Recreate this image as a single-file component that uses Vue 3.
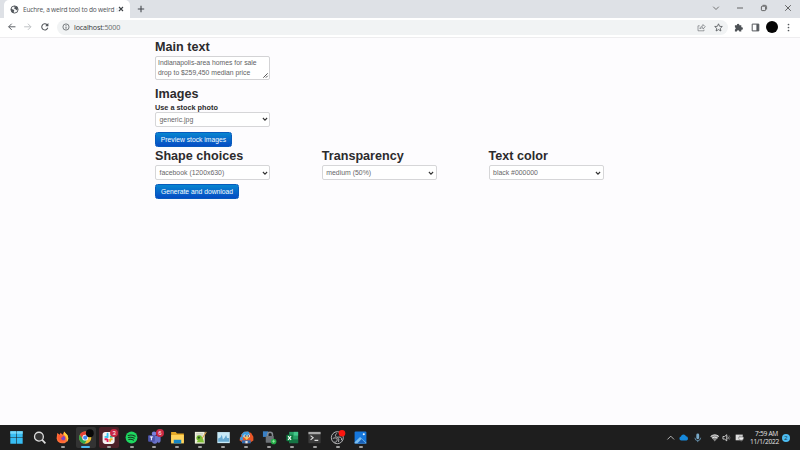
<script setup>
const choices = [
  { title: 'Shape choices', value: 'facebook (1200x630)' },
  { title: 'Transparency', value: 'medium (50%)' },
  { title: 'Text color', value: 'black #000000' },
]
const apps = ['start', 'search', 'firefox', 'chrome', 'slack', 'spotify', 'teams', 'folder', 'notepad', 'monitor', 'parrot', 'lock', 'excel', 'terminal', 'obs', 'photos']
</script>

<template>
  <div class="screen">
    <header class="tabs">
      <div class="tab">
        <svg class="globe" viewBox="0 0 10 10"><circle cx="5" cy="5" r="4" fill="#f7f8f8" stroke="#51565b" /><path d="M1 3.8 3.2 5.1 4.8 5.5 4.2 7 4.6 8.8 2.4 8 1.2 6zM4.2 1.1 8 2 8.8 4.7 7.3 5.7 6.2 4.6 4.6 4.2 5.2 3z" fill="#51565b" /></svg>
        <span class="tab-title">Euchre, a weird tool to do weird <span>s</span></span>
        <svg class="close" viewBox="0 0 6 6"><path d="m1 1 4 4M5 1 1 5" stroke="#3d4145" stroke-width="1.1" /></svg>
      </div>
      <svg class="plus" viewBox="0 0 8 8"><path d="M4 .8v6.4M.8 4h6.4" stroke="#45494e" stroke-width="1.1" /></svg>
      <div class="window-controls">
        <svg viewBox="0 0 8 8"><path d="m1.2 2.7 2.8 2.8 2.8-2.8" fill="none" stroke="#555" stroke-width=".8" /></svg>
        <svg viewBox="0 0 8 8"><path d="M1 4h6" stroke="#444" stroke-width=".8" /></svg>
        <svg viewBox="0 0 8 8"><rect x="1.4" y="2.2" width="4.2" height="4.4" rx=".8" fill="none" stroke="#444" stroke-width=".8" /><path d="M2.6 1.3h2.6q1.4 0 1.4 1.4v2.7" fill="none" stroke="#444" stroke-width=".7" /></svg>
        <svg viewBox="0 0 8 8"><path d="m1.2 1.2 5.6 5.6m0-5.6L1.2 6.8" stroke="#444" stroke-width=".8" /></svg>
      </div>
    </header>

    <nav class="toolbar">
      <div class="nav-icons">
        <svg viewBox="0 0 10 10"><path d="M8.8 5H1.8M4.9 1.8 1.7 5l3.2 3.2" fill="none" stroke="#55595e" /></svg>
        <svg viewBox="0 0 10 10"><path d="M1.2 5h7M5.1 1.8 8.3 5 5.1 8.2" fill="none" stroke="#bdc0c3" /></svg>
        <svg viewBox="0 0 10 10"><path d="M8.1 6A3.2 3.2 0 1 1 7.3 2.8L8.2 4" fill="none" stroke="#505459" stroke-width="1.1" /><path d="M8.7 1.1v3.3H5.4z" fill="#505459" /></svg>
      </div>
      <div class="address">
        <svg class="info" viewBox="0 0 8 8"><circle cx="4" cy="4" r="3.1" fill="none" stroke="#5b5f63" stroke-width=".8" /><path d="M4 3.6v2.1M4 2.1v.8" stroke="#55595d" stroke-width=".9" /></svg>
        <span class="url">localhost<span>:5000</span></span>
        <div class="address-actions">
          <svg viewBox="0 0 9 9"><path d="M2.7 2.8H1v5h6V6.6M2.9 6c.2-2 1.3-3 3.1-3V1.5l2.3 2.3L6 6V4.7C4.5 4.7 3.6 5 2.9 6z" fill="none" stroke="#73777b" stroke-width=".7" /></svg>
          <svg viewBox="0 0 9 9"><path d="m4.5.8 1.1 2.5 2.7.2-2 1.8.6 2.7-2.4-1.4L2.1 8l.6-2.7-2-1.8 2.7-.2z" fill="none" stroke="#4e5256" stroke-width=".8" /></svg>
        </div>
      </div>
      <div class="browser-actions">
        <svg viewBox="0 0 9 9"><path d="M.9 2.3h2a1.25 1.25 0 1 1 2.4 0h2v2a1.25 1.25 0 1 1 0 2.4v1.7H5.3a1.2 1.2 0 0 0-2.4 0h-2V6.5a1.2 1.2 0 0 0 0-2.3z" fill="#4e5256" /></svg>
        <svg viewBox="0 0 9 9"><path d="M1.2 1.1h6.6v6.8H1.2z" fill="none" stroke="#54585c" stroke-width="1" /><path d="M5.4 1.1h2.4v6.8H5.4z" fill="#54585c" /></svg>
        <span class="avatar"></span>
        <svg viewBox="0 0 9 9"><g fill="#54585c"><circle cx="4.5" cy="1.5" r=".85" /><circle cx="4.5" cy="4.5" r=".85" /><circle cx="4.5" cy="7.5" r=".85" /></g></svg>
      </div>
    </nav>

    <main class="page">
      <h3>Main text</h3>
      <div class="textarea">Indianapolis-area homes for sale<br>drop to $259,450 median price
        <svg viewBox="0 0 5 5"><path d="M.3 4.7 4.7.3M2.8 4.7l1.9-1.9" stroke="#444" stroke-width=".9" /></svg>
      </div>
      <h3 class="images-title">Images</h3>
      <label>Use a stock photo</label>
      <div class="select">generic.jpg<svg viewBox="0 0 6 6"><path d="m.9 2 2.1 2.1L5.1 2" fill="none" stroke="#333" stroke-width="1.1" /></svg></div>
      <button class="preview">Preview stock images</button>
      <div class="choices">
        <section v-for="choice in choices" :key="choice.title">
          <h3>{{ choice.title }}</h3>
          <div class="select">{{ choice.value }}<svg viewBox="0 0 6 6"><path d="m.9 2 2.1 2.1L5.1 2" fill="none" stroke="#333" stroke-width="1.1" /></svg></div>
        </section>
      </div>
      <button class="generate">Generate and download</button>
    </main>

    <footer class="taskbar">
      <div class="apps">
        <div v-for="app in apps" :key="app" class="app" :class="app">
          <svg viewBox="0 0 16 16">
            <g v-if="app === 'start'"><path d="M1.4 1.4h6.3v6.3H1.4zM8.3 1.4h6.3v6.3H8.3zM1.4 8.3h6.3v6.3H1.4zM8.3 8.3h6.3v6.3H8.3z" fill="#37bdf3" /><path d="M1.4 1.4h6.3v2.6H1.4zM8.3 1.4h6.3v2.6H8.3z" fill="#75d8fa" /></g>
            <g v-else-if="app === 'search'" fill="none" stroke="#ddd"><circle cx="7.4" cy="7.1" r="4.7" fill="#343434" stroke-width="1.4" /><path d="m10.8 10.5 3.5 3.7" stroke-width="1.8" /></g>
            <g v-else-if="app === 'firefox'"><path d="M2.4 3.2 5 5l1-2 2 2 2-3.4 3 4 1 3.9A6.3 6.3 0 0 1 1.7 9z" fill="#ff7139" /><path d="m9.5 1.6 4 4 .8 3.8-1.5 3.5C13 8 11 6 9.5 5z" fill="#ffce3a" /><circle cx="8" cy="8.8" r="2.8" fill="#7748c6" /><path d="m3 5 3.2.5L9 7.2 6.3 8.5l1.2 2.2 2.6.4A4.2 4.2 0 0 1 3 9z" fill="#ff5b31" /></g>
            <g v-else-if="app === 'chrome'"><circle cx="7.7" cy="8.2" r="6.5" fill="#f0bf31" /><path d="M1.9 5.1A6.5 6.5 0 0 1 13.5 5H7.7L5 9.8z" fill="#e54235" /><path d="M1.9 5.1A6.5 6.5 0 0 0 7 14.6L10 9.8 7.7 11 5 9.8z" fill="#2da84f" /><circle cx="7.7" cy="8.2" r="3.1" fill="#fff" /><circle cx="7.7" cy="8.2" r="2.3" fill="#4286ec" /><circle cx="12.6" cy="3.4" r="4.2" fill="#080808" /></g>
            <g v-else-if="app === 'slack'"><rect x="1.7" y="2" width="12.8" height="12.8" rx="3" fill="#f4f3f4" /><path d="M7 4v3.6" stroke="#36c5f0" stroke-width="2" stroke-linecap="round" /><path d="M3.8 7.4H7" stroke="#36c5f0" stroke-width="1.8" /><path d="M9.5 7.1h3" stroke="#2eb67d" stroke-width="2" /><path d="M9.7 9.6v3M9.7 9.8h2.7" stroke="#ecb22e" stroke-width="2" /><path d="M7 9.7v3M3.8 9.8H7" stroke="#e01e5a" stroke-width="2" /></g>
            <g v-else-if="app === 'spotify'"><circle cx="8" cy="8" r="6.3" fill="#1ed760" /><path d="M4.4 5.8q4-1.1 7.5.8M4.7 8q3.5-.8 6.3.8M5.1 10.1q2.8-.6 5 .7" fill="none" stroke="#183c22" stroke-width="1.2" stroke-linecap="round" /></g>
            <g v-else-if="app === 'teams'"><circle cx="7.5" cy="4.1" r="2.4" fill="#7980dc" /><path d="M5 6h6.8v5.2c0 2-1.5 3.4-3.4 3.4S5 13.2 5 11.2zM11 7h3.5v4.2c0 1.6-1 2.5-2.7 2.5z" fill="#6871c9" /><rect x="1.2" y="5.6" width="7.2" height="6.8" rx="1" fill="#4e56ad" /><path d="M3 7.4h3.5M4.7 7.4v3.5" stroke="#fff" /></g>
            <g v-else-if="app === 'folder'"><path d="M1.2 2.2h5l1.2 1.6h7.4V13H1.2z" fill="#e5a927" /><path d="M1.2 5.3h13.6v9H1.2z" fill="#ffd35c" /><path d="M4 10.4h8v3.9H4z" fill="#1686c5" /></g>
            <g v-else-if="app === 'notepad'"><path d="M2 2h10.5v12.5H2z" fill="#eff0dd" /><path d="M3.5 4h7M3.5 5.6h7" stroke="#999" stroke-width=".5" /><circle cx="6.6" cy="8.5" r="3" fill="#6fb92a" /><path d="m3.5 13 6.7-5.7 1.6 6z" fill="#7fbe35" /><circle cx="6.2" cy="8" r="1.2" fill="#294b1e" /><path d="m9.7 9 4.5-7" stroke="#d6a04b" stroke-width="1.1" /></g>
            <g v-else-if="app === 'monitor'"><path d="M1.4 2.2h13.3v11.8H1.4z" fill="#c8e9f7" /><path d="M2.3 9 4.8 8l1.4-3 1.2 5 2-2 1.4-2.6 1 3 2.1.2v4H2.3z" fill="#66a9d1" /></g>
            <g v-else-if="app === 'parrot'"><path d="m.5 11 2-6L5 2l4-.5 4 1.8 2.3 4v4L11 14H5z" fill="#e95626" /><path d="m2.5 4.8 3-3L10 1.7l2 3.2-8 3zM.8 8.5l2.6-2 1 3.8-2.8 1z" fill="#3b9bdf" /><circle cx="6.3" cy="6.3" r="1.6" fill="#fff" /><circle cx="10" cy="6.3" r="1.6" fill="#fff" /><circle cx="6.6" cy="6.3" r=".8" /><circle cx="9.8" cy="6.3" r=".8" /><path d="m6 8.2 2-1.6 2.4 1.6-2.2 2.5z" fill="#eec85c" /><path d="M3.2 11h9.3v3.2H3.2z" fill="#326caf" /><path d="M6.8 11.7h2.4v2.5H6.8z" fill="#e8e6e1" /></g>
            <g v-else-if="app === 'lock'"><path d="M1 1.4h5.7v6H1z" fill="#397fc4" /><path d="M6 7V5a2.6 2.6 0 0 1 5.2 0v2" fill="none" stroke="#858a90" stroke-width="1.6" /><rect x="4" y="6.5" width="8.6" height="7" rx=".6" fill="#6e7378" /><circle cx="12.4" cy="12.2" r="3" fill="#24ad47" /><path d="M12.4 10.4v3.3M10.8 12h3.2" stroke="#a4efad" stroke-width=".8" /></g>
            <g v-else-if="app === 'excel'"><path d="M4.5 2H14v12H4.5z" fill="#279e65" /><path d="M9.3 2H14v4H9.3z" fill="#43c78b" /><path d="M4.5 10H14v4H4.5z" fill="#167344" /><rect x="1.5" y="5" width="7.2" height="7" rx=".8" fill="#107c41" /><path d="m3.3 6.5 3.2 4M6.5 6.5l-3.2 4" stroke="#fff" stroke-width="1.2" /></g>
            <g v-else-if="app === 'terminal'"><rect x="1.5" y="2" width="13" height="12.2" rx="1" fill="#3b3b3b" /><path d="M1.5 2h13v2.5h-13z" fill="#aaa" /><path d="m3.8 6 2.8 2.3-2.8 2.3M8 11h4" fill="none" stroke="#ddd" stroke-width="1.2" /></g>
            <g v-else-if="app === 'obs'"><circle cx="7.8" cy="8.2" r="6.4" fill="#222326" stroke="#c8c8c8" stroke-width=".9" /><path d="M7.3 3.5c-3 2.6-1 4.8 1.8 4.1 2.6-.6 4 1.2 3 3.3M3 9c3.6-1.6 5.5.3 4.3 2.6-.6 1.4-2 1.8-2.8 1.2" fill="none" stroke="#b8b8b8" stroke-width="1" /><path d="M7.8 8.2q2.7.6 1.3 4.6" fill="none" stroke="#b8b8b8" stroke-width="1" /><circle cx="12.8" cy="3.5" r="3.5" fill="#fb1710" /></g>
            <g v-else><rect x="1.7" y="1.6" width="12.6" height="12.8" rx="1" fill="#1677dc" /><path d="m1.7 13 5.8-5.6 6.8 6.1v.9H1.7z" fill="#79bdf0" /><path d="m4.5 14.4 4.7-4.8 4.7 4.8z" fill="#1861ba" /><circle cx="11.5" cy="4.5" r="1.1" fill="#eff9ff" /></g>
          </svg>
          <span v-if="app === 'slack'" class="badge">3</span>
          <span v-if="app === 'teams'" class="badge">6</span>
        </div>
      </div>
      <div class="tray">
        <svg viewBox="0 0 10 10"><path d="M1.5 6.8 5 3.3l3.5 3.5" fill="none" stroke="#ccc" stroke-width=".9" /></svg>
        <svg viewBox="0 0 10 10"><path d="M2.4 8a2.2 2.2 0 0 1-.4-4.3 2.9 2.9 0 0 1 5.4-.3A2.4 2.4 0 0 1 8 8z" fill="#1689dc" /></svg>
        <svg viewBox="0 0 10 10"><rect x="3.5" y=".6" width="3" height="6" rx="1.5" fill="#78a9c8" /><path d="M2 5q0 3 3 3t3-3M5 8v1.6" fill="none" stroke="#6e9cba" stroke-width=".9" /></svg>
        <svg viewBox="0 0 10 10"><path d="M.6 3.5q4.4-3.3 8.8 0L5 8.9z" fill="#888" /><path d="M.7 3.6q4.3-3.3 8.6 0M2.2 5.3q2.8-2 5.6 0" fill="none" stroke="#eee" /></svg>
        <svg viewBox="0 0 10 10"><path d="M1 3.7h1.7L5 1.8v6.5L2.7 6.4H1z" fill="none" stroke="#ddd" stroke-width=".9" /><path d="M6.2 3.8q1 1.2 0 2.5" fill="none" stroke="#ddd" stroke-width=".8" /><path d="M7.4 2.5q2.1 2.5 0 5" fill="none" stroke="#777" stroke-width=".7" /></svg>
        <svg viewBox="0 0 10 10"><path d="M.7 1.7h7.5v6H.7z" fill="#ddd" /><path d="M4 4.2h5v1.6q0 1.8-2.5 1.8T4 5.8zM5.2 2.6v1.6m2.4-1.6v1.6M6.5 7.5v2" fill="#eee" stroke="#666" stroke-width=".6" /></svg>
        <div class="clock">7:59 AM<br>11/1/2022</div>
        <span class="notices">2</span>
      </div>
    </footer>
  </div>
</template>

<style>
body { margin: 0; overflow: hidden; }
</style>

<style scoped>
* { box-sizing: border-box; }
svg { display: block; flex-shrink: 0; overflow: visible; }
.screen { width: 800px; height: 450px; display: flex; flex-direction: column; background: #fdfcfe; color: #2c2b2d; font-family: "Liberation Sans", Arial, sans-serif; }
.tabs { height: 18px; background: #dee1e6; display: flex; align-items: center; padding-left: 4px; }
.tab { width: 126px; height: 18px; background: #fff; border-radius: 5px 5px 0 0; display: flex; align-items: center; padding: 0 6px; }
.globe { width: 9px; height: 9px; margin-right: 4px; }
.tab-title { width: 91px; white-space: nowrap; font: 6.6px "Open Sans", sans-serif; letter-spacing: -.2px; color: #505357; }
.tab-title span { color: #e3e4e5; }
.close { width: 6px; height: 6px; margin-left: 4px; }
.plus { width: 8px; height: 8px; margin-left: 6.5px; }
.window-controls { margin-left: auto; display: flex; gap: 16px; padding-right: 8px; padding-bottom: 2px; }
.window-controls svg { width: 8px; height: 8px; }
.toolbar { height: 19.5px; display: flex; align-items: center; background: #fff; border-bottom: 1px solid #eeedef; padding-left: 6.5px; }
.nav-icons { display: flex; gap: 7px; width: 50px; }
.nav-icons svg { width: 9.6px; height: 9.6px; }
.address { width: 671px; height: 15px; border-radius: 8px; background: #f1f3f4; display: flex; align-items: center; padding: 0 5px; }
.info { width: 8px; height: 8px; }
.url { margin-left: 4.5px; font: 7.2px "Open Sans", sans-serif; letter-spacing: -.16px; color: #35383b; }
.url span { color: #686b6f; }
.address-actions { display: flex; gap: 7.5px; margin-left: auto; }
.address-actions svg { width: 9px; height: 9px; }
.browser-actions { display: flex; align-items: center; gap: 7.5px; margin-left: 6.5px; }
.browser-actions svg { width: 9px; height: 9px; }
.avatar { width: 12px; height: 12px; border-radius: 50%; background: #050505; margin: 0 -1.5px 0 -1px; }
.page { flex: 1; padding-left: 155px; }
h3 { margin: 0; font-size: 12.6px; line-height: 18px; font-weight: bold; white-space: nowrap; }
.textarea { position: relative; width: 115px; height: 24px; border: 1px solid #d3d3d5; border-radius: 2px; background: #fff; padding: 1.5px 2px; font-size: 6.8px; line-height: 10px; color: #626264; white-space: nowrap; }
.textarea svg { position: absolute; width: 5px; height: 5px; right: 1px; bottom: 1px; }
.images-title { margin-top: 5.5px; }
label { display: block; font-size: 7.3px; font-weight: bold; line-height: 9.5px; height: 8.5px; }
.select { width: 115px; height: 15px; border: 1px solid #d6d6d8; border-radius: 2px; background: #fff; display: flex; align-items: center; justify-content: space-between; padding: 0 1.5px 0 3.5px; color: #666668; font-size: 6.9px; }
.select svg { width: 6px; height: 6px; }
button { display: block; height: 15px; border: 1px solid #075bbd; border-radius: 2.5px; background: linear-gradient(#0785d0, #064cc4); color: #f8fcff; padding: 0; font: 6.75px "Liberation Sans", Arial, sans-serif; white-space: nowrap; }
.preview { width: 77px; margin-top: 5px; }
.generate { width: 84px; margin-top: 4px; }
.choices { display: grid; grid-template-columns: repeat(3, 166.8px); padding-top: .5px; }
.taskbar { height: 25px; background: #1e1e1e; display: flex; align-items: center; padding-left: 5.5px; }
.apps { display: flex; }
.app { position: relative; width: 22.93px; height: 25px; display: flex; justify-content: center; padding-top: 5px; }
.app > svg { width: 15px; height: 15px; z-index: 1; }
.app:nth-child(n+3)::after { content: ""; position: absolute; bottom: 2.5px; width: 4px; height: 1.5px; border-radius: 1px; background: #a0a0a0; }
.chrome::before, .slack::before { content: ""; position: absolute; inset: 2px 1.5px; border-radius: 2px; background: #333; }
.slack::before { background: #4d2028; }
.app.chrome::after { width: 9px; background: #4bbaf1; }
.badge { position: absolute; z-index: 2; right: 2px; top: 4px; width: 8px; height: 8px; border-radius: 50%; background: #c92844; color: #fff; font-size: 6px; line-height: 8px; text-align: center; }
.tray { margin-left: auto; display: flex; align-items: center; padding-right: 10px; }
.tray svg { width: 9.5px; height: 9.5px; margin-right: 3px; }
.tray svg:nth-child(2) { margin-right: 5px; }
.tray svg:nth-child(3) { margin-right: 7px; }
.tray svg:nth-child(6) { margin-right: 6px; }
.clock { width: 28px; text-align: right; color: #e4e4e4; font: 6.6px/8px "Open Sans", sans-serif; letter-spacing: -.25px; white-space: nowrap; }
.notices { margin-left: 4px; width: 8px; height: 8px; border-radius: 50%; background: #4cbcf1; color: #153b51; text-align: center; font-size: 6px; line-height: 8px; }
</style>
